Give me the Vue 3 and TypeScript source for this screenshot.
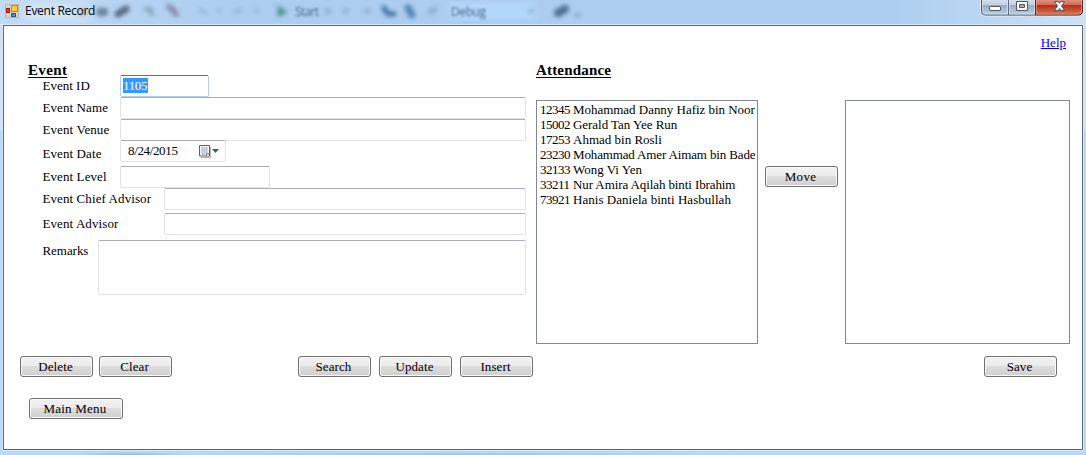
<script setup lang="ts">
interface Field {
  id: string
  label: string
  kind: 'text' | 'date' | 'area'
  value: string
}

interface Attendee {
  no: string
  name: string
  tracking: number
}

const fields: Field[] = [
  { id: 'event-id', label: 'Event ID', kind: 'text', value: '1105' },
  { id: 'event-name', label: 'Event Name', kind: 'text', value: '' },
  { id: 'event-venue', label: 'Event Venue', kind: 'text', value: '' },
  { id: 'event-date', label: 'Event Date', kind: 'date', value: '8/24/2015' },
  { id: 'event-level', label: 'Event Level', kind: 'text', value: '' },
  { id: 'chief-advisor', label: 'Event Chief Advisor', kind: 'text', value: '' },
  { id: 'advisor', label: 'Event Advisor', kind: 'text', value: '' },
  { id: 'remarks', label: 'Remarks', kind: 'area', value: '' },
]

const attendees: Attendee[] = [
  { no: '12345', name: 'Mohammad Danny Hafiz bin Noor', tracking: -0.03 },
  { no: '15002', name: 'Gerald Tan Yee Run', tracking: -0.04 },
  { no: '17253', name: 'Ahmad bin Rosli', tracking: 0 },
  { no: '23230', name: 'Mohammad Amer Aimam bin Bade', tracking: -0.14 },
  { no: '32133', name: 'Wong Vi Yen', tracking: 0 },
  { no: '33211', name: 'Nur Amira Aqilah binti Ibrahim', tracking: -0.1 },
  { no: '73921', name: 'Hanis Daniela binti Hasbullah', tracking: 0.03 },
]
</script>

<template>
  <div class="window">
    <header class="titlebar">
      <svg class="glass" width="1086" height="24" viewBox="0 0 1086 24">
        <defs>
          <filter id="soft" filterUnits="userSpaceOnUse" x="0" y="-20" width="1086" height="64"><feGaussianBlur stdDeviation="2" /></filter>
          <filter id="haze" filterUnits="userSpaceOnUse" x="0" y="-20" width="1086" height="64"><feGaussianBlur stdDeviation="1.3" /></filter>
          <filter id="glow" filterUnits="userSpaceOnUse" x="-20" y="-20" width="1106" height="64"><feGaussianBlur stdDeviation="6" /></filter>
        </defs>
        <rect x="450" y="3" width="86" height="16" fill="#b3d7fb" filter="url(#soft)" />
        <g filter="url(#soft)" stroke-linecap="round" fill="none">
          <path d="M80 12h3M100 12h4" stroke="#46586e" stroke-width="8" opacity=".7" />
          <path d="M118 14l8-5" stroke="#46586e" stroke-width="7" opacity=".85" />
          <path d="M146 9h4l2 5" stroke="#4c7f8c" stroke-width="4" opacity=".55" />
          <path d="M169 7l4 3 3 4" stroke="#665878" stroke-width="6" opacity=".55" />
          <path d="M200 10l6 3M235 12l6-2M218 11h2M255 11h3" stroke="#6d8fb1" stroke-width="4" opacity=".35" />
          <path d="M279 8v7l6-3z" stroke="#2f8378" fill="#2f8378" stroke-width="3" opacity=".75" />
          <path d="M327 11h2M345 11h1M367 11h1M430 12l5-3M531 11h1" stroke="#58789b" stroke-width="5" opacity=".4" />
          <path d="M384 8l4 6h6" stroke="#265d8d" stroke-width="5" opacity=".8" />
          <path d="M408 8l4 7" stroke="#265d8d" stroke-width="7" opacity=".65" />
          <path d="M558 13l7-4" stroke="#324d6c" stroke-width="8" opacity=".75" />
          <path d="M577 15h1" stroke="#324d6c" stroke-width="4" opacity=".4" />
        </g>
        <g class="behind" filter="url(#haze)">
          <text x="295" y="16" textLength="24">Start</text>
          <text x="451" y="16" textLength="35">Debug</text>
        </g>
        <rect x="24" y="3" width="66" height="17" fill="#dceaf9" filter="url(#glow)" opacity=".85" />
      </svg>
      <svg class="app-icon" width="14" height="14" viewBox="0 0 14 14">
        <rect x=".5" y=".5" width="13" height="13" fill="#d6d2ca" stroke="#bdb8ae" />
        <rect x="6.5" y="1.5" width="6" height="6" fill="#ffc927" stroke="#c18a10" />
        <rect x="1.5" y="4.5" width="3" height="4" fill="#dc3b2d" stroke="#9e1c13" />
        <rect x="6.5" y="9.5" width="4" height="3" fill="#4c86dc" stroke="#2456a6" />
      </svg>
      <span class="caption">Event Record</span>
      <svg class="controls" width="104" height="17" viewBox="0 0 104 17">
        <defs>
          <linearGradient id="pane" x2="0" y2="1">
            <stop offset="0" stop-color="#d5e1ed" /><stop offset=".36" stop-color="#c0cedd" />
            <stop offset=".38" stop-color="#98abc1" /><stop offset="1" stop-color="#bcd0e4" />
          </linearGradient>
          <linearGradient id="red" x2="0" y2="1">
            <stop offset="0" stop-color="#df9a88" /><stop offset=".36" stop-color="#d16b54" />
            <stop offset=".38" stop-color="#b72c15" /><stop offset="1" stop-color="#d87750" />
          </linearGradient>
        </defs>
        <path d="M.5 -1v12q0 5 5 5h93q5 0 5-5V-1" fill="url(#pane)" stroke="#e0edf9" />
        <path d="M1.5 -1v12q0 4 4 4h50V-1z" fill="url(#pane)" stroke="#48586b" />
        <path d="M55.5 -1v16h42.500q4.500 0 4.500-4V-1z" fill="url(#red)" stroke="#581d19" />
        <path d="M28.5 0v15" stroke="#5b6b7f" />
        <path d="M2.5 0v11q0 3 3 3h22V0M29.5 0v14h25V0" fill="none" stroke="#e4eef8" opacity=".6" />
        <path d="M56.5 0v14h41q4 0 4-4V0" fill="none" stroke="#efb0a0" opacity=".6" />
        <rect x="9.5" y="6.5" width="11" height="4" rx=".6" fill="#fff" stroke="#525963" />
        <path d="M36.5 1.5h11v9h-11zM39.5 4.5h5v3h-5z" fill="#fff" fill-rule="evenodd" stroke="#525963" />
        <path d="M74.500 1.500h3.800l1.200 1.800 1.200-1.800h3.800l-2.900 4.500 2.900 4.500h-3.800l-1.200-1.900-1.200 1.900h-3.800l2.900-4.500z" fill="#f6f6f6" stroke="#525564" />
      </svg>
    </header>

    <main class="client">
      <section class="event">
        <h2>Event</h2>
        <div class="form">
          <div v-for="f in fields" :key="f.id" class="row" :class="f.id">
            <label>{{ f.label }}</label>
            <div class="box" :class="f.kind">
              <span v-if="f.id === 'event-id'" class="selection">{{ f.value }}</span>
              <template v-else-if="f.kind === 'date'">
                <span class="date-value">{{ f.value }}</span>
                <svg width="21" height="14" viewBox="0 0 21 14">
                  <path d="M2 12.500h9.500V2" fill="none" stroke="#b4afa9" />
                  <path d="M.5 .5h10v10.500h-10z" fill="#f2f3f7" stroke="#66615f" />
                  <path d="M2 3h7M2 5h7M2 7h7M2 9h5M3.500 2v8M5.500 2v8M7.500 2v6" stroke="#a9b2c3" stroke-width=".7" />
                  <path d="M7.500 11v-2.500h3" fill="#fff" stroke="#8a8580" />
                  <path d="M13 4h7l-3.500 4z" fill="#43597f" />
                </svg>
              </template>
            </div>
          </div>
        </div>
        <div class="actions">
          <button>Delete</button>
          <button>Clear</button>
          <button class="search">Search</button>
          <button class="spaced">Update</button>
          <button class="spaced">Insert</button>
        </div>
        <button class="menu">Main Menu</button>
      </section>

      <section class="attendance">
        <div class="heading">
          <h2>Attendance</h2>
          <a class="help">Help</a>
        </div>
        <div class="lists">
          <ul class="list source">
            <li v-for="a in attendees" :key="a.no">
              <span class="number">{{ a.no }}</span>
              <span class="name" :style="{ letterSpacing: a.tracking + 'px' }">{{ a.name }}</span>
            </li>
          </ul>
          <button class="move">Move</button>
          <ul class="list target"></ul>
        </div>
        <button class="save">Save</button>
      </section>
    </main>
  </div>
</template>

<style>
html, body { margin: 0; overflow: hidden; }
</style>

<style scoped>
* { box-sizing: border-box; }
.window {
  width: 1086px;
  height: 455px;
  display: flex;
  flex-direction: column;
  background:
    radial-gradient(ellipse 60px 3px at 130px 455px, #96b6d6 0%, transparent 100%),
    radial-gradient(ellipse 300px 3px at 450px 455px, #a0c0e2 0%, transparent 100%),
    linear-gradient(#c5dbf2 0, #d4e4f5 60px, #d4e4f5 128px, #b5d8fb 132px, #b5d8fb 100%);
  font-family: "Liberation Serif", "Times New Roman", serif;
  font-size: 13px;
  color: #000;
  overflow: hidden;
}
.titlebar {
  position: relative;
  height: 25px;
  flex: none;
  display: flex;
  align-items: flex-start;
  padding: 0 2px 0 5px;
  border-bottom: 1px solid #d9e8f8;
  background: linear-gradient(90deg, #c2daf3 0, #b6d3f1 120px, #accdf0 250px, #accdf0 880px, #bad6f2 980px, #cde1f5 100%);
}
.glass { position: absolute; left: 0; top: 0; }
.behind { font: 12px "Open Sans", sans-serif; fill: #2f4e70; opacity: .8; }
.app-icon { position: relative; margin-top: 4px; }
.caption {
  position: relative;
  margin: 3px 0 0 6px;
  font: 12px/16px "Open Sans", "Noto Sans", sans-serif;
  letter-spacing: -.28px;
}
.controls { position: relative; margin: 0 0 0 auto; }
.client {
  display: flex;
  width: 1080px;
  height: 425px;
  margin-left: 3px;
  flex: none;
  border: 1px solid #596979;
  background: #fff;
  box-shadow: 0 0 0 1px #d6e7f7;
}
h2 {
  margin: 0;
  font-size: 15px;
  line-height: 17px;
  font-weight: bold;
  letter-spacing: .18px;
  text-decoration: underline;
  text-decoration-thickness: 1px;
  text-underline-offset: 2px;
}
.event { width: 532px; padding-top: 36px; flex: none; }
.event h2 { margin-left: 24px; height: 13px; letter-spacing: .35px; }
.form { height: 281px; }
.row { display: flex; width: 522px; padding-left: 38px; }
label { flex: none; width: 78px; line-height: 16px; padding: 3px 0 0 .5px; white-space: nowrap; letter-spacing: .09px; }
.box {
  flex: 1;
  height: 22px;
  border: 1px solid #e2e3ea;
  border-top-color: #abadb3;
  border-radius: 2px;
}
.event-id label { letter-spacing: 0; }
.event-id .box { flex: none; width: 89px; border-color: #b5cfe7; border-top-color: #3d7bad; padding: 2px; }
.selection {
  display: block;
  width: 25px;
  height: 15px;
  line-height: 16px;
  background: #3399ff;
  color: #fff;
  letter-spacing: -.35px;
}
.event-date { margin-top: -1px; }
.event-date .box { flex: none; width: 106px; display: flex; padding: 4px 5px 0 7px; }
.event-date label { padding-top: 6px; }
.date-value { line-height: 14px; margin-top: -1px; flex: 1; letter-spacing: -.35px; }
.event-level { margin-top: 4px; }
.event-level .box { flex: none; width: 150px; }
.chief-advisor label, .advisor label { width: 122px; }
.advisor { margin-top: 3px; }
.remarks { margin-top: 5px; }
.remarks label { width: 56px; letter-spacing: -.05px; }
.remarks .box { height: 55px; }
button {
  flex: none;
  width: 73px;
  height: 21px;
  padding: 0 2px 0 0;
  border: 1px solid #707070;
  border-radius: 3px;
  background: linear-gradient(#f2f2f2 0, #ebebeb 47%, #dddddd 50%, #cfcfcf 100%);
  box-shadow: inset 0 0 0 1px #fafafa;
  font: 13px/19px "Liberation Serif", "Times New Roman", serif;
  letter-spacing: .1px;
  color: #000;
}
.actions { display: flex; padding-left: 16px; gap: 6px; }
.actions .search { margin-left: 120px; }
.actions .spaced { margin-left: 2px; }
.menu { display: block; width: 94px; margin: 21px 0 0 25px; letter-spacing: .2px; }
.attendance { width: 546px; padding-top: 10px; display: flex; flex-direction: column; }
.heading { display: flex; justify-content: space-between; height: 64px; padding-right: 16px; }
.heading h2 { padding-top: 26px; }
.help { color: #0000ff; text-decoration: underline; line-height: 15px; height: 15px; text-underline-offset: 1px; margin-top: -1px; }
.lists { display: flex; height: 244px; }
.list { margin: 0; padding: 1px 0 0 3px; border: 1px solid #828790; list-style: none; overflow: hidden; }
.source { width: 222px; }
.target { width: 225px; }
.list li { display: flex; height: 15px; line-height: 15px; white-space: nowrap; }
.number { width: 33px; letter-spacing: -.5px; }
.move { margin: 66px 7px 0 7px; letter-spacing: .3px; }
.save { margin: 12px 0 0 448px; }
</style>
